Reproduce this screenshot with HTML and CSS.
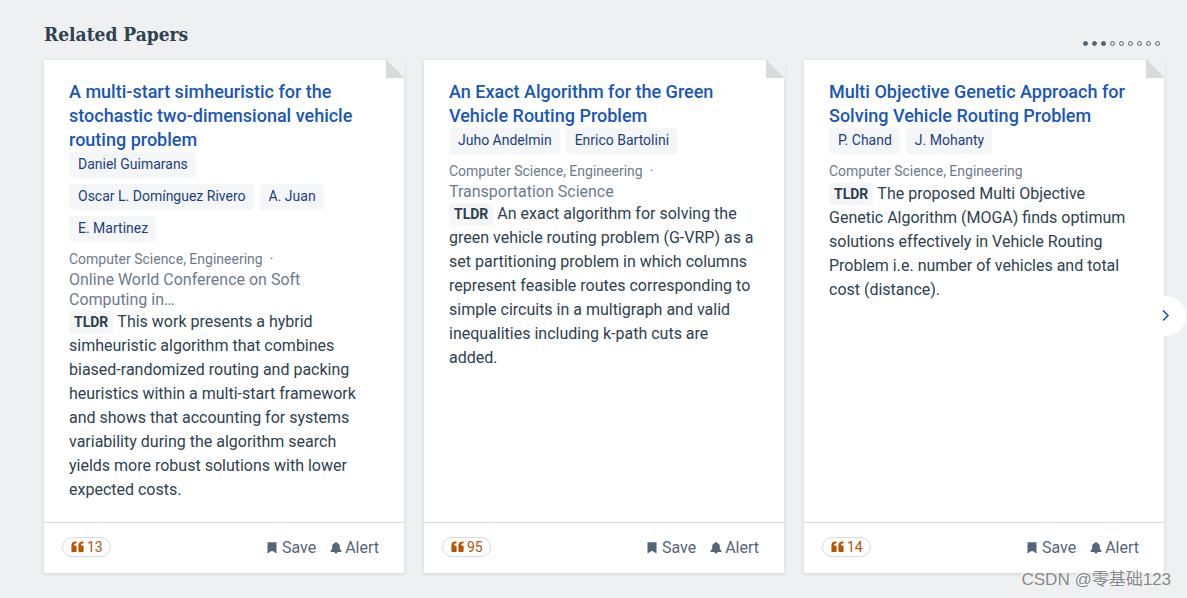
FILE: index.html
```html
<!DOCTYPE html>
<html lang="en">
<head>
<meta charset="utf-8">
<title>Related Papers</title>
<link rel="stylesheet" href="styles.css">
</head>
<body>
<svg class="sprite" aria-hidden="true">
  <symbol id="quote" viewBox="0 0 13 12"><path d="M5.5 0.5V2.6H4.6C3.5 2.6 3.1 3.2 3.1 4.6H4.6Q5.6 4.6 5.6 5.6V10Q5.6 11 4.6 11H1.4Q0.4 11 0.4 10V4.8C0.4 2 1.8 0.5 4.4 0.5ZM12.5 0.5V2.6H11.6C10.5 2.6 10.1 3.2 10.1 4.6H11.6Q12.6 4.6 12.6 5.6V10Q12.6 11 11.6 11H8.4Q7.4 11 7.4 10V4.8C7.4 2 8.8 0.5 11.4 0.5Z"/></symbol>
  <symbol id="bookmark" viewBox="0 0 10 12"><path d="M0.5 0.3H9.5V11.5L5 8.7L0.5 11.5Z"/></symbol>
  <symbol id="bell" viewBox="0 0 12 12"><path d="M5 1.1Q5 0.1 6 0.1Q7 0.1 7 1.1Q9.8 1.8 9.8 4.8V7L11.4 8.6V10H0.6V8.6L2.2 7V4.8Q2.2 1.8 5 1.1ZM4.4 10H7.6Q7.3 11.6 6 11.6Q4.7 11.6 4.4 10Z"/></symbol>
</svg>
<main class="related">
  <header class="related-header">
    <h2 class="related-title">Related Papers</h2>
    <div class="dots" aria-hidden="true">
      <span class="dot dot-on"></span><span class="dot dot-on"></span><span class="dot dot-on"></span><span class="dot"></span><span class="dot"></span><span class="dot"></span><span class="dot"></span><span class="dot"></span><span class="dot"></span>
    </div>
  </header>
  <div class="cards">
    <article class="card">
      <div class="card-body">
        <h3 class="title"><a href="#">A multi-start simheuristic for the stochastic two-dimensional vehicle routing problem</a></h3>
        <div class="authors"><a href="#">Daniel Guimarans</a><a href="#">Oscar L. Domínguez Rivero</a><a href="#">A. Juan</a><a href="#">E. Martinez</a></div>
        <div class="fields">Computer Science, Engineering<span class="sep">·</span></div>
        <div class="venue">Online World Conference on Soft Computing in…</div>
        <p class="summary"><span class="tldr">TLDR</span>This work presents a hybrid simheuristic algorithm that combines biased-randomized routing and packing heuristics within a multi-start framework and shows that accounting for systems variability during the algorithm search yields more robust solutions with lower expected costs.</p>
      </div>
      <footer class="card-footer">
        <a class="cites" href="#"><svg class="icon-quote"><use href="#quote"/></svg>13</a>
        <div class="actions">
          <button type="button"><svg class="icon-bookmark"><use href="#bookmark"/></svg>Save</button>
          <button type="button"><svg class="icon-bell"><use href="#bell"/></svg>Alert</button>
        </div>
      </footer>
    </article>
    <article class="card">
      <div class="card-body">
        <h3 class="title"><a href="#">An Exact Algorithm for the Green Vehicle Routing Problem</a></h3>
        <div class="authors"><a href="#">Juho Andelmin</a><a href="#">Enrico Bartolini</a></div>
        <div class="fields">Computer Science, Engineering<span class="sep">·</span></div>
        <div class="venue">Transportation Science</div>
        <p class="summary"><span class="tldr">TLDR</span>An exact algorithm for solving the green vehicle routing problem (G-VRP) as a set partitioning problem in which columns represent feasible routes corresponding to simple circuits in a multigraph and valid inequalities including k-path cuts are added.</p>
      </div>
      <footer class="card-footer">
        <a class="cites" href="#"><svg class="icon-quote"><use href="#quote"/></svg>95</a>
        <div class="actions">
          <button type="button"><svg class="icon-bookmark"><use href="#bookmark"/></svg>Save</button>
          <button type="button"><svg class="icon-bell"><use href="#bell"/></svg>Alert</button>
        </div>
      </footer>
    </article>
    <article class="card">
      <div class="card-body">
        <h3 class="title"><a href="#">Multi Objective Genetic Approach for Solving Vehicle Routing Problem</a></h3>
        <div class="authors"><a href="#">P. Chand</a><a href="#">J. Mohanty</a></div>
        <div class="fields">Computer Science, Engineering</div>
        <p class="summary"><span class="tldr">TLDR</span>The proposed Multi Objective Genetic Algorithm (MOGA) finds optimum solutions effectively in Vehicle Routing Problem i.e. number of vehicles and total cost (distance).</p>
      </div>
      <footer class="card-footer">
        <a class="cites" href="#"><svg class="icon-quote"><use href="#quote"/></svg>14</a>
        <div class="actions">
          <button type="button"><svg class="icon-bookmark"><use href="#bookmark"/></svg>Save</button>
          <button type="button"><svg class="icon-bell"><use href="#bell"/></svg>Alert</button>
        </div>
      </footer>
    </article>
    <button class="next" type="button" aria-label="Next papers"><svg class="icon-next" viewBox="0 0 8 12"><path d="M1 0.5L6 5.5L1 10.5"/></svg></button>
  </div>
  <div class="watermark">CSDN @零基础123</div>
</main>
</body>
</html>
```
FILE: styles.css
```css
* { box-sizing: border-box; }

body {
  margin: 0;
  background: #eff0f2;
  color: #2e414f;
  font-family: Roboto, "Liberation Sans", sans-serif;
  font-size: 16px;
  line-height: 24px;
}

a { color: inherit; text-decoration: none; }

button {
  border: 0;
  padding: 0;
  background: none;
  color: inherit;
  font: inherit;
  cursor: pointer;
}

.sprite { display: none; }

.related {
  position: relative;
  padding: 20px 23px 25px 44px;
}

.related-header {
  display: flex;
  justify-content: space-between;
  align-items: flex-end;
  padding-bottom: 12px;
}

.related-title {
  margin: 0;
  font-family: "Roboto Slab", "DejaVu Serif Condensed", "DejaVu Serif", serif;
  font-size: 19px;
  font-weight: 700;
  line-height: 28px;
}

.dots {
  display: flex;
  gap: 4px;
  padding: 0 4px 2px 0;
}

.dot {
  width: 5px;
  height: 5px;
  border: 1px solid #546579;
  border-radius: 50%;
}

.dot-on { background: #546579; }

.cards {
  position: relative;
  display: grid;
  grid-template-columns: repeat(3, minmax(0, 1fr));
  gap: 20px;
}

.card {
  position: relative;
  display: flex;
  flex-direction: column;
  background: #fff;
  box-shadow: 0 1px 4px rgba(0, 0, 0, 0.12);
}

.card::after {
  content: "";
  position: absolute;
  top: -1px;
  right: -1px;
  width: 19px;
  height: 19px;
  background: linear-gradient(45deg, #d8dadc 50%, #eff0f2 50%);
}

.card-body {
  flex: 1;
  padding: 20px 25px;
}

.title {
  margin: 0;
  color: #1857b6;
  font-size: 18px;
  font-weight: 500;
}

.authors {
  display: flex;
  flex-wrap: wrap;
  gap: 6px;
  margin-bottom: 7px;
  color: #1b3f7e;
  font-size: 14px;
}

.authors a {
  padding: 1px 8px 3px 9px;
  border-radius: 3px;
  background: #f4f6f8;
  line-height: 22px;
}

.fields, .venue { color: #6d7b8c; }

.fields {
  font-size: 14px;
  line-height: 21px;
}

.venue { line-height: 20px; }

.sep { margin-left: 7px; }

.summary { margin: 0; }

.tldr {
  display: inline-block;
  margin-right: 4px;
  padding: 0 5px;
  border-radius: 4px;
  background: #f4f6f8;
  font-size: 14px;
  font-weight: 700;
  line-height: 22px;
}

.card-footer {
  display: flex;
  justify-content: space-between;
  align-items: center;
  height: 51px;
  padding: 0 25px 0 18px;
  border-top: 1px solid #d8dadc;
}

.cites {
  display: flex;
  align-items: center;
  gap: 3px;
  height: 20px;
  margin-bottom: 2px;
  padding: 0 7px 0 8px;
  border: 1px solid #d8dadc;
  border-radius: 10px;
  color: #b45309;
  font-size: 14px;
  line-height: 18px;
}

.icon-quote { width: 13px; height: 12px; fill: #b85400; }

.actions {
  display: flex;
  gap: 14px;
  color: #546579;
}

.actions button {
  display: flex;
  align-items: center;
  gap: 5px;
}

.actions svg { fill: #546579; }

.icon-bookmark { width: 10px; height: 12px; }

.actions button + button { gap: 3px; }

.icon-bell { width: 12px; height: 12px; }

.next {
  position: absolute;
  top: 236px;
  right: -22px;
  display: flex;
  align-items: center;
  justify-content: center;
  width: 40px;
  height: 40px;
  border-radius: 50%;
  background: #fff;
}

.icon-next {
  width: 8px;
  height: 12px;
  fill: none;
  stroke: #1857b6;
  stroke-width: 1.6;
}

.watermark {
  position: absolute;
  right: 16px;
  bottom: 6px;
  color: #868889;
  font-family: "Liberation Sans", "Noto Sans CJK SC", sans-serif;
  font-size: 17px;
  text-shadow: -1px -1px 0 #fff;
}
```
